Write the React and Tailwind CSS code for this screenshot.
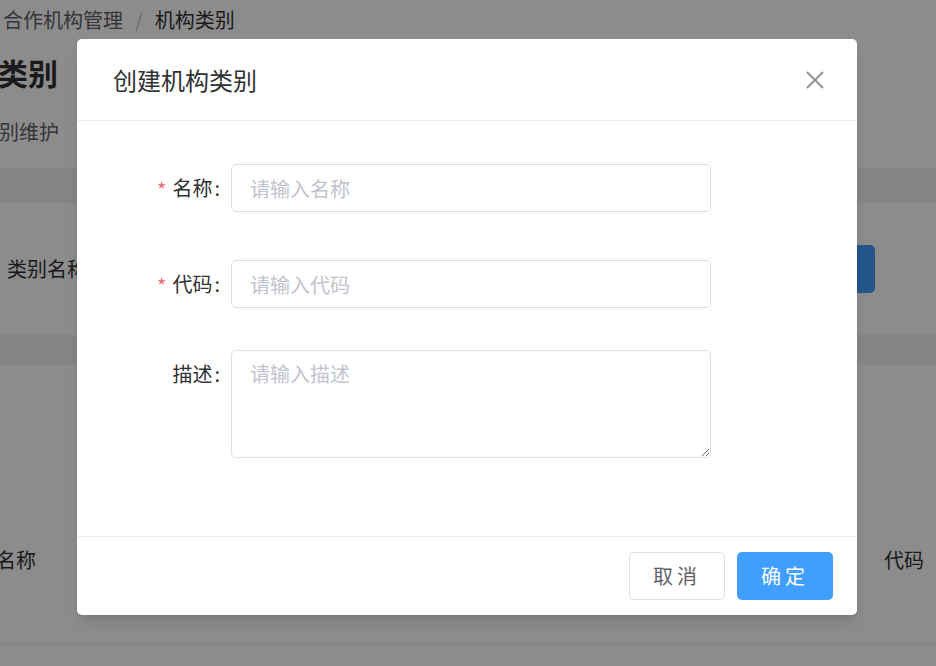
import React from "react";

const font = { fontFamily: '"Noto Sans CJK SC", "Noto Sans", sans-serif' };

const Field = ({ label, required, placeholder, area }) => (
  <div className="flex items-start">
    <div className="w-[154px] flex justify-end items-center h-[48px] text-[20px] text-[#303133] pr-[11px]">
      {required && <span className="text-[#f56c6c] mr-[6px] text-[20px] leading-none pt-[4px]">*</span>}
      {label}<span className="ml-[2px]">:</span>
    </div>
    {area ? (
      <textarea
        placeholder={placeholder}
        className="w-[480px] h-[108px] border border-[#dcdfe6] rounded-[5px] px-[18px] py-[8px] text-[20px] placeholder-[#c0c4cc] outline-none"
      />
    ) : (
      <input
        placeholder={placeholder}
        className="w-[480px] h-[48px] border border-[#dcdfe6] rounded-[5px] px-[18px] text-[20px] placeholder-[#c0c4cc] outline-none"
      />
    )}
  </div>
);

export default function App() {
  return (
    <div className="relative w-[936px] h-[666px] overflow-hidden bg-white" style={font}>
      {/* page behind */}
      <div className="flex flex-col h-full text-[#303133]">
        <div className="h-[40px] flex items-center px-[3px] text-[20px] text-[#606266]">
          合作机构管理<span className="mx-[12px] text-[#c0c4cc]">/</span><span className="text-[#303133]">机构类别</span>
        </div>
        <div className="h-[64px] flex items-center text-[30px] font-bold ml-[-62px]">机构类别</div>
        <div className="h-[56px] flex items-center text-[20px] text-[#606266] ml-[-61px]">机构类别维护</div>
        <div className="h-[8px]" />
        <div className="h-[35px] bg-[#f0f2f5]" />
        <div className="h-[132px] flex items-center justify-between pl-[7px] pr-[61px]">
          <span className="text-[20px]">类别名称</span>
          <span className="w-[80px] h-[48px] rounded-[5px] bg-[#409eff]" />
        </div>
        <div className="h-[30px] bg-[#f0f2f5]" />
        <div className="h-[110px]" />
        <div className="h-[170px] flex items-center justify-between pl-[0px] pr-[12px] text-[20px] border-b border-[#ebeef5]">
          <span className="ml-[-4px]">名称</span>
          <span>代码</span>
        </div>
      </div>
      <div className="absolute inset-0 bg-black/45" />

      {/* dialog */}
      <div className="absolute left-[77px] top-[39px] w-[780px] h-[576px] bg-white rounded-[5px] shadow-lg flex flex-col">
        <div className="h-[82px] flex items-center justify-between px-[36px] border-b border-[#ebeef5]">
          <span className="text-[24px] text-[#303133]">创建机构类别</span>
          <svg width="20" height="20" viewBox="0 0 20 20" className="mr-[-4px]">
            <path d="M2 2L18 18M18 2L2 18" stroke="#909399" strokeWidth="2" />
          </svg>
        </div>
        <div className="flex-1 flex flex-col pt-[43px] gap-[48px]">
          <Field label="名称" required placeholder="请输入名称" />
          <Field label="代码" required placeholder="请输入代码" />
          <div className="mt-[-6px]">
            <Field label="描述" placeholder="请输入描述" area />
          </div>
        </div>
        <div className="h-[79px] border-t border-[#ebeef5] flex items-start justify-end gap-[12px] pt-[15px] pr-[24px]">
          <button className="w-[96px] h-[48px] border border-[#dcdfe6] rounded-[5px] text-[20px] text-[#606266] tracking-[4px]">取消</button>
          <button className="w-[96px] h-[48px] rounded-[5px] bg-[#409eff] text-[20px] text-white tracking-[4px]">确定</button>
        </div>
      </div>
    </div>
  );
}
